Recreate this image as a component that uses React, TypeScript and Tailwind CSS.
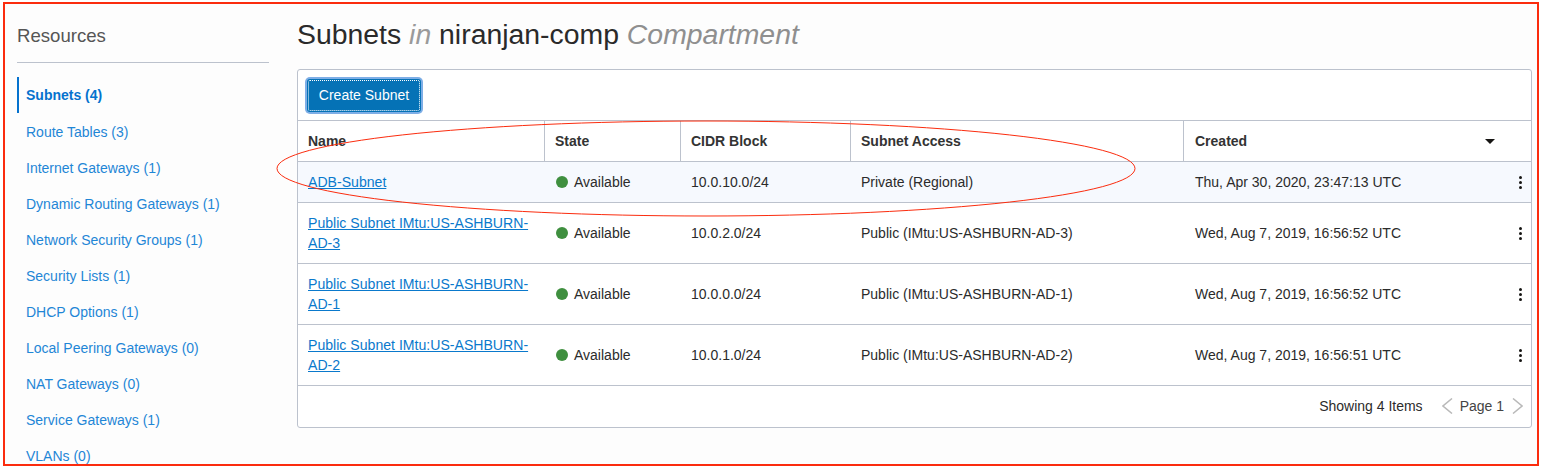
import React from "react";

const resources = [
  "Route Tables (3)",
  "Internet Gateways (1)",
  "Dynamic Routing Gateways (1)",
  "Network Security Groups (1)",
  "Security Lists (1)",
  "DHCP Options (1)",
  "Local Peering Gateways (0)",
  "NAT Gateways (0)",
  "Service Gateways (1)",
  "VLANs (0)",
];

const subnets = [
  { name: "ADB-Subnet", cidr: "10.0.10.0/24", access: "Private (Regional)", created: "Thu, Apr 30, 2020, 23:47:13 UTC" },
  { name: "Public Subnet IMtu:US-ASHBURN-AD-3", cidr: "10.0.2.0/24", access: "Public (IMtu:US-ASHBURN-AD-3)", created: "Wed, Aug 7, 2019, 16:56:52 UTC" },
  { name: "Public Subnet IMtu:US-ASHBURN-AD-1", cidr: "10.0.0.0/24", access: "Public (IMtu:US-ASHBURN-AD-1)", created: "Wed, Aug 7, 2019, 16:56:52 UTC" },
  { name: "Public Subnet IMtu:US-ASHBURN-AD-2", cidr: "10.0.1.0/24", access: "Public (IMtu:US-ASHBURN-AD-2)", created: "Wed, Aug 7, 2019, 16:56:51 UTC" },
];

const headers = ["Name", "State", "CIDR Block", "Subnet Access"];
const cols = "grid grid-cols-[247px_136px_170px_333px_1fr]";

function Kebab() {
  return (
    <div className="flex flex-col gap-[2px]">
      <span className="w-[3px] h-[3px] rounded-full bg-[#161513]" />
      <span className="w-[3px] h-[3px] rounded-full bg-[#161513]" />
      <span className="w-[3px] h-[3px] rounded-full bg-[#161513]" />
    </div>
  );
}

function Chevron({ dir }: { dir: "left" | "right" }) {
  return (
    <svg width="11" height="16" viewBox="0 0 11 16" fill="none" stroke="#b9b9b9" strokeWidth="1.5">
      <polyline points={dir === "left" ? "10,0.5 1,8 10,15.5" : "1,0.5 10,8 1,15.5"} />
    </svg>
  );
}

export default function App() {
  return (
    <div className="relative w-[1544px] h-[469px] overflow-hidden bg-white font-['Liberation_Sans',Arial,sans-serif]">
      {/* annotation frame */}
      <div className="ml-[3px] mt-[2px] w-[1536px] h-[464px] border-2 border-[#fb2c0e] bg-[#fdfdfd] overflow-hidden flex">
        {/* Sidebar */}
        <aside className="ml-[12px] w-[252px] shrink-0">
          <h2 className="mt-[19px] text-[18.6px] leading-[26px] text-[#555555]">Resources</h2>
          <div className="mt-[13px] border-b border-[#bcc2cd]" />
          <div className="mt-[14px] text-[14px]">
            <div className="h-[36px] border-l-2 border-[#0572ce] pl-[7px] flex items-center font-bold text-[#0572ce]">Subnets (4)</div>
            <ul className="mt-[1px]">
              {resources.map((r) => (
                <li key={r} className="h-[36px] pl-[9px] flex items-center text-[#1f86d6]">{r}</li>
              ))}
            </ul>
          </div>
        </aside>

        {/* Main */}
        <main className="ml-[28px] w-[1235px] shrink-0">
          <h1 className="mt-[11px] h-[41px] text-[28.4px] leading-[38px] text-[#2a2a2a]">
            Subnets <em className="text-[#9a9a9a]">in</em> niranjan-comp <em className="text-[#8f8f8f]">Compartment</em>
          </h1>
          <div className="mt-[13px] h-[359px] border border-[#bcc2cd] rounded-[3px] bg-white text-[14px] text-[#2b2b2b]">
            {/* Toolbar */}
            <div className="h-[51px] pl-[9px] flex items-center border-b border-[#bcc2cd]">
              <button className="h-[33px] w-[114px] rounded-[3px] bg-[#0572b6] text-white text-[14px] outline-dotted outline-1 outline-offset-[-2px] outline-white ring-2 ring-[#7eaee6]">
                Create Subnet
              </button>
            </div>

            {/* Header */}
            <div className={`${cols} h-[41px] border-b border-[#bcc2cd] font-bold text-[#333]`}>
              {headers.map((h) => (
                <div key={h} className="border-r border-[#bcc2cd] pl-[10px] flex items-center">{h}</div>
              ))}
              <div className="pl-[11px] pr-[36px] flex items-center justify-between">
                Created
                <span className="w-0 h-0 border-x-[5px] border-x-transparent border-t-[5px] border-t-[#161513]" />
              </div>
            </div>

            {/* Rows */}
            {subnets.map((s, i) => (
              <div key={s.name} className={`${cols} ${i === 0 ? "h-[41px] bg-[#f6f9fe]" : "h-[61px]"} border-b border-[#bcc2cd] items-center`}>
                <div className="pl-[10px] pr-[12px] text-[14.1px] leading-[20px]">
                  <a href="#" className="underline text-[#0a79cc]">{s.name}</a>
                </div>
                <div className="pl-[11px] flex items-center gap-[6px]">
                  <span className="w-[12px] h-[12px] rounded-full bg-[#3f8f3f]" />
                  Available
                </div>
                <div className="pl-[10px]">{s.cidr}</div>
                <div className="pl-[10px]">{s.access}</div>
                <div className="pl-[11px] pr-[9px] flex items-center justify-between">
                  {s.created}
                  <Kebab />
                </div>
              </div>
            ))}

            {/* Footer */}
            <div className="h-[40px] pr-[8px] flex items-center justify-end">
              <span>Showing 4 Items</span>
              <span className="ml-[19px]"><Chevron dir="left" /></span>
              <span className="ml-[7px] text-[#444]">Page 1</span>
              <span className="ml-[8px]"><Chevron dir="right" /></span>
            </div>
          </div>
        </main>
      </div>

      {/* hand-drawn highlight */}
      <svg className="absolute inset-0 pointer-events-none" width="1544" height="469">
        <ellipse cx="706" cy="168.5" rx="429" ry="47.5" fill="none" stroke="#fb2c0e" strokeWidth="1" />
      </svg>
    </div>
  );
}
